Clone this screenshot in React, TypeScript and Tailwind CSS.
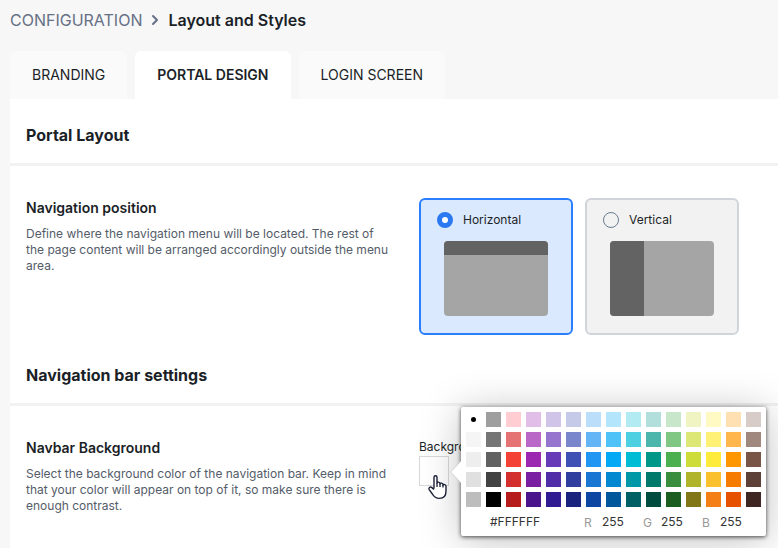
import { useState } from "react"
import { ChevronRight } from "lucide-react"

const tabs = ["BRANDING", "PORTAL DESIGN", "LOGIN SCREEN"]

// one row per shade, from light to dark
const palette: string[][] = [
  ["#ffffff", "#9e9e9e", "#ffcdd2", "#e1bee7", "#d1c4e9", "#c5cae9", "#bbdefb", "#b3e5fc", "#b2ebf2", "#b2dfdb", "#c8e6c9", "#f0f4c3", "#fff9c4", "#ffe0b2", "#d7ccc8"],
  ["#f5f5f5", "#757575", "#e57373", "#ba68c8", "#9575cd", "#7986cb", "#64b5f6", "#4fc3f7", "#4dd0e1", "#4db6ac", "#81c784", "#dce775", "#fff176", "#ffb74d", "#a1887f"],
  ["#eeeeee", "#616161", "#f44336", "#9c27b0", "#673ab7", "#3f51b5", "#2196f3", "#03a9f4", "#00bcd4", "#009688", "#4caf50", "#cddc39", "#ffeb3b", "#ff9800", "#795548"],
  ["#e0e0e0", "#424242", "#d32f2f", "#7b1fa2", "#512da8", "#303f9f", "#1976d2", "#0288d1", "#0097a7", "#00796b", "#388e3c", "#afb42b", "#fbc02d", "#f57c00", "#5d4037"],
  ["#bdbdbd", "#000000", "#b71c1c", "#4a148c", "#311b92", "#1a237e", "#0d47a1", "#01579b", "#006064", "#004d40", "#1b5e20", "#827717", "#f57f17", "#e65100", "#3e2723"],
]

type SectionProps = {
  title: string;
  children: React.ReactNode;
};

const Section: React.FC<SectionProps> = ({ title, children }) => (
  <section>
    <h2 className="border-b-3 border-[#f2f2f2] px-4 pt-6 pb-4 text-base font-bold">{title}</h2>
    <div className="px-4 pt-8 pb-1">{children}</div>
  </section>
)

type SettingProps = {
  name: string;
  description: string;
  children: React.ReactNode;
};

const Setting: React.FC<SettingProps> = ({ name, description, children }) => (
  <div className="grid grid-cols-[393px_1fr]">
    <div className="pr-6">
      <h3 className="text-sm font-semibold">{name}</h3>
      <p className="mt-2 text-xs leading-4 text-[#545c69]">{description}</p>
    </div>
    <div>{children}</div>
  </div>
)

type LayoutOptionProps = {
  label: string;
  checked: boolean;
  onSelect: () => void;
  children: React.ReactNode;
};

const LayoutOption: React.FC<LayoutOptionProps> = ({ label, checked, onSelect, children }) => (
  <label
    className={
      checked
        ? "flex w-[154px] flex-col rounded-md border-2 border-[#2b7fff] bg-[#dbe9ff] px-4 pt-3 pb-[17px] cursor-pointer"
        : "flex w-[154px] flex-col rounded-md border-2 border-[#d1d5db] bg-[#f2f2f2] px-4 pt-3 pb-[17px] cursor-pointer"
    }
  >
    <span className="flex items-center gap-[10px] text-xs">
      <input
        type="radio"
        name="position"
        checked={checked}
        onChange={onSelect}
        className="size-4 appearance-none rounded-full border border-[#6b7a90] checked:border-5 checked:border-[#2b78f0] checked:bg-white"
      />
      {label}
    </span>
    <span className="mt-[13px] mx-[7px] flex h-[75px] overflow-hidden rounded-sm bg-[#a5a5a5]">{children}</span>
  </label>
)

const HandCursor = () => (
  <svg className="pointer-events-none absolute top-[18px] left-[8px]" width="22" height="26" viewBox="0 0 22 26">
    <path
      d="M7 14.5V3.2C7 1.2 10 1.2 10 3.2V9C10.2 7.8 13 7.8 13 9.6V10C13.2 8.8 16 8.8 16 10.6V11.2C16.2 10.2 19 10.3 19 12.2V17C19 21.5 16.6 24.4 12.4 24.4C8.4 24.4 6.8 22.6 5.4 20L2.2 15.6C1.2 13.8 3.2 12.4 4.6 13.4L7 15.5"
      fill="#fff"
      stroke="#1a1f35"
      strokeWidth="1.4"
      strokeLinejoin="round"
    />
    <path d="M10 9V13M13 9.8V13M16 10.8V13.5" stroke="#1a1f35" strokeWidth="1.3" fill="none" />
  </svg>
)

type ColorPickerProps = {
  color: string;
  setColor: (color: string) => void;
};

const ColorPicker: React.FC<ColorPickerProps> = ({ color, setColor }) => {
  const channels = [
    { name: "R", value: parseInt(color.slice(1, 3), 16) },
    { name: "G", value: parseInt(color.slice(3, 5), 16) },
    { name: "B", value: parseInt(color.slice(5, 7), 16) },
  ]

  return (
    <div className="absolute top-[-49px] left-[42px] w-[305px] rounded-xs bg-white p-[5px] pb-1 shadow-[0_1px_4px_rgba(0,0,0,0.7),0_4px_40px_rgba(0,0,0,0.25)]">
      <svg className="absolute top-[53px] left-[-11px]" width="12" height="24" viewBox="0 0 12 24">
        <path d="M12 0 0.5 12 12 24Z" fill="#fff" />
        <path d="M11 1 0.5 12 11 23" fill="none" stroke="#ccc" />
      </svg>
      <div className="grid grid-cols-15 gap-[5px]">
        {palette.flat().map((shade) => (
          <button
            key={shade}
            type="button"
            aria-label={shade}
            onClick={() => setColor(shade)}
            className="flex size-[15px] items-center justify-center"
            style={{ backgroundColor: shade }}
          >
            {shade === color && <span className="size-[5px] rounded-full bg-black" />}
          </button>
        ))}
      </div>
      <div className="mt-[5px] flex h-5 items-center text-xs text-[#333]">
        <input
          aria-label="Hex"
          value={color.toUpperCase()}
          onChange={(e) => setColor(e.target.value)}
          className="ml-6 w-[94px] outline-none"
        />
        {channels.map((channel) => (
          <label key={channel.name} className="flex w-[59px] items-center">
            <span className="w-[18px] pt-[2px] text-[#999]">{channel.name}</span>
            <input value={channel.value} readOnly className="w-8 outline-none" />
          </label>
        ))}
      </div>
    </div>
  )
}

const App = () => {
  const [activeTab, setActiveTab] = useState<string>("PORTAL DESIGN")
  const [position, setPosition] = useState<string>("Horizontal")
  const [color, setColor] = useState<string>("#ffffff")

  return (
    <div className="flex min-h-screen flex-col overflow-hidden bg-[#f7f7f7] pl-[10px] font-['Inter',sans-serif] text-[#1b1f27]">
      <nav className="flex h-[51px] items-center gap-[5px] pb-[11px] text-base">
        <a href="#" className="text-[#667085]">CONFIGURATION</a>
        <ChevronRight size={16} strokeWidth={3} className="text-[#667085]" />
        <span className="font-semibold">Layout and Styles</span>
      </nav>

      <div role="tablist" className="flex gap-2 text-sm">
        {tabs.map((tab) => (
          <button
            key={tab}
            type="button"
            role="tab"
            aria-selected={tab === activeTab}
            onClick={() => setActiveTab(tab)}
            className={
              tab === activeTab
                ? "h-12 rounded-t-md bg-white px-[22px] font-semibold"
                : "h-12 rounded-t-md bg-[#fafafa] px-[22px]"
            }
          >
            {tab}
          </button>
        ))}
      </div>

      <main className="flex-1 bg-white">
        <Section title="Portal Layout">
          <Setting
            name="Navigation position"
            description="Define where the navigation menu will be located. The rest of the page content will be arranged accordingly outside the menu area."
          >
            <div className="flex gap-3">
              <LayoutOption label="Horizontal" checked={position === "Horizontal"} onSelect={() => setPosition("Horizontal")}>
                <span className="h-[14px] w-full bg-[#636363]" />
              </LayoutOption>
              <LayoutOption label="Vertical" checked={position === "Vertical"} onSelect={() => setPosition("Vertical")}>
                <span className="w-[34px] bg-[#636363]" />
              </LayoutOption>
            </div>
          </Setting>
        </Section>

        <Section title="Navigation bar settings">
          <Setting
            name="Navbar Background"
            description="Select the background color of the navigation bar. Keep in mind that your color will appear on top of it, so make sure there is enough contrast."
          >
            <label htmlFor="navbar-color" className="block text-xs leading-[18px]">Background</label>
            <div className="relative">
              <button
                id="navbar-color"
                type="button"
                className="block size-[30px] border border-[#d9d9d9]"
                style={{ backgroundColor: color }}
              />
              <ColorPicker color={color} setColor={setColor} />
              <HandCursor />
            </div>
          </Setting>
        </Section>
      </main>
    </div>
  )
}

export default App
